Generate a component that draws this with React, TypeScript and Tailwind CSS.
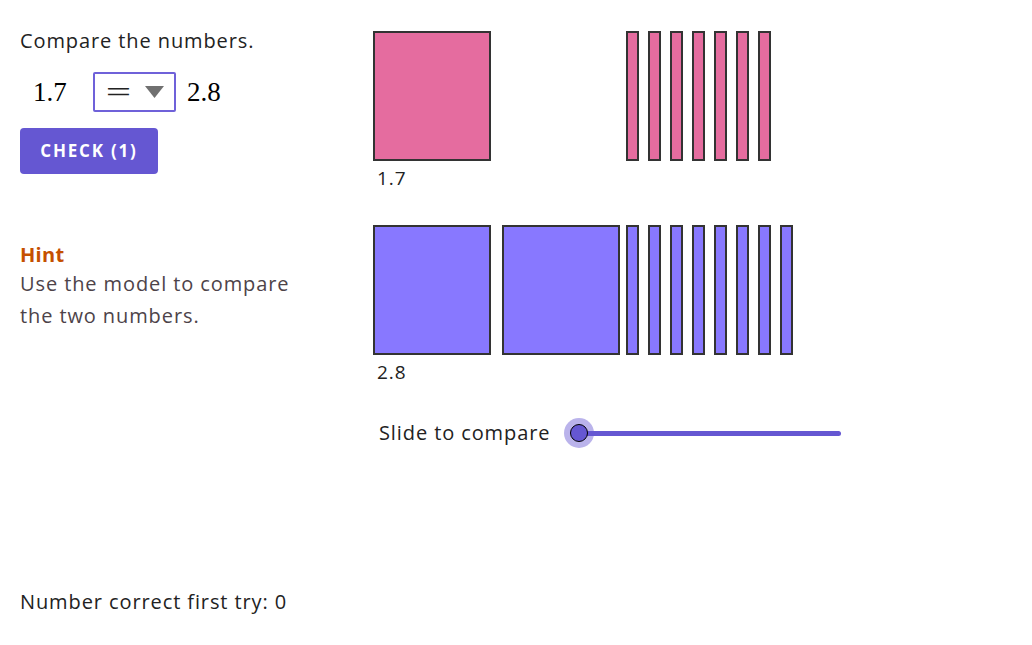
const PINK_BARS = 7;
const BLUE_BARS = 8;

function Square({ color }: { color: string }) {
  return <div className={`h-[130px] w-[118px] border-2 border-[#333] ${color}`} />;
}

function Bars({ count, color }: { count: number; color: string }) {
  return (
    <div className="flex gap-[9px]">
      {Array.from({ length: count }).map((_, i) => (
        <div key={i} className={`h-[130px] w-[13px] border-2 border-[#333] ${color}`} />
      ))}
    </div>
  );
}

export default function App() {
  return (
    <div
      className="relative h-[645px] w-[1032px] bg-white text-[#222] tracking-[0.9px]"
      style={{ fontFamily: '"Open Sans", sans-serif' }}
    >
      <div className="flex">
        {/* Left: question */}
        <div className="w-[373px] pl-5 pt-[27px]">
          <p className="text-[20px] leading-[28px]">Compare the numbers.</p>

          <div
            className="mt-[17px] flex items-center tracking-normal"
            style={{ fontFamily: '"Liberation Serif", serif' }}
          >
            <span className="ml-[13px] w-[60px] text-[27px] text-black">1.7</span>
            <div className="flex h-[40px] w-[83px] items-center justify-between rounded-[2px] border-2 border-[#6f61d9] pl-[15px] pr-[10px]">
              <span className="inline-block scale-x-150 text-[30px] leading-none text-[#222]">=</span>
              <svg width="19" height="12" viewBox="0 0 19 12">
                <polygon points="0,0 19,0 9.5,12" fill="#707070" />
              </svg>
            </div>
            <span className="ml-[11px] text-[27px] text-black">2.8</span>
          </div>

          <button className="mt-[15px] flex h-[46px] w-[138px] items-center justify-center rounded-[4px] bg-[#6557d2] text-[17px] font-bold tracking-[1.8px] text-white">
            CHECK (1)
          </button>

          <div className="mt-[68px]">
            <p className="text-[20px] font-bold leading-[26px] tracking-[0.3px] text-[#c55000]">Hint</p>
            <p className="text-[20px] leading-[32px] text-[#4d4349]">
              Use the model to compare
              <br />
              the two numbers.
            </p>
          </div>
        </div>

        {/* Right: model */}
        <div className="pt-[31px]">
          <div className="flex">
            <Square color="bg-[#e56c9f]" />
            <div className="ml-[135px]">
              <Bars count={PINK_BARS} color="bg-[#e56c9f]" />
            </div>
          </div>
          <p className="ml-[4px] mt-[5px] text-[19px] leading-[24px] text-[#222]">1.7</p>

          <div className="mt-[35px] flex">
            <Square color="bg-[#8878ff]" />
            <div className="ml-[11px]">
              <Square color="bg-[#8878ff]" />
            </div>
            <div className="ml-[6px]">
              <Bars count={BLUE_BARS} color="bg-[#8878ff]" />
            </div>
          </div>
          <p className="ml-[4px] mt-[5px] text-[19px] leading-[24px] text-[#222]">2.8</p>

          <div className="mt-[34px] flex items-center">
            <span className="ml-[6px] text-[20px] text-[#222]">Slide to compare</span>
            <div className="relative ml-[14px] h-[30px] w-[280px]">
              <div className="absolute left-[14px] top-[12.5px] h-[5px] w-[263px] rounded-full bg-[#6557d2]" />
              <div className="absolute left-0 top-0 h-[30px] w-[30px] rounded-full bg-[#6557d2]/45" />
              <div className="absolute left-[6px] top-[6px] h-[18px] w-[18px] rounded-full border-[1.5px] border-black bg-[#6557d2]" />
            </div>
          </div>
        </div>
      </div>

      <p className="absolute left-5 top-[588px] text-[20px] leading-[28px] text-[#222]">
        Number correct first try: 0
      </p>
    </div>
  );
}
